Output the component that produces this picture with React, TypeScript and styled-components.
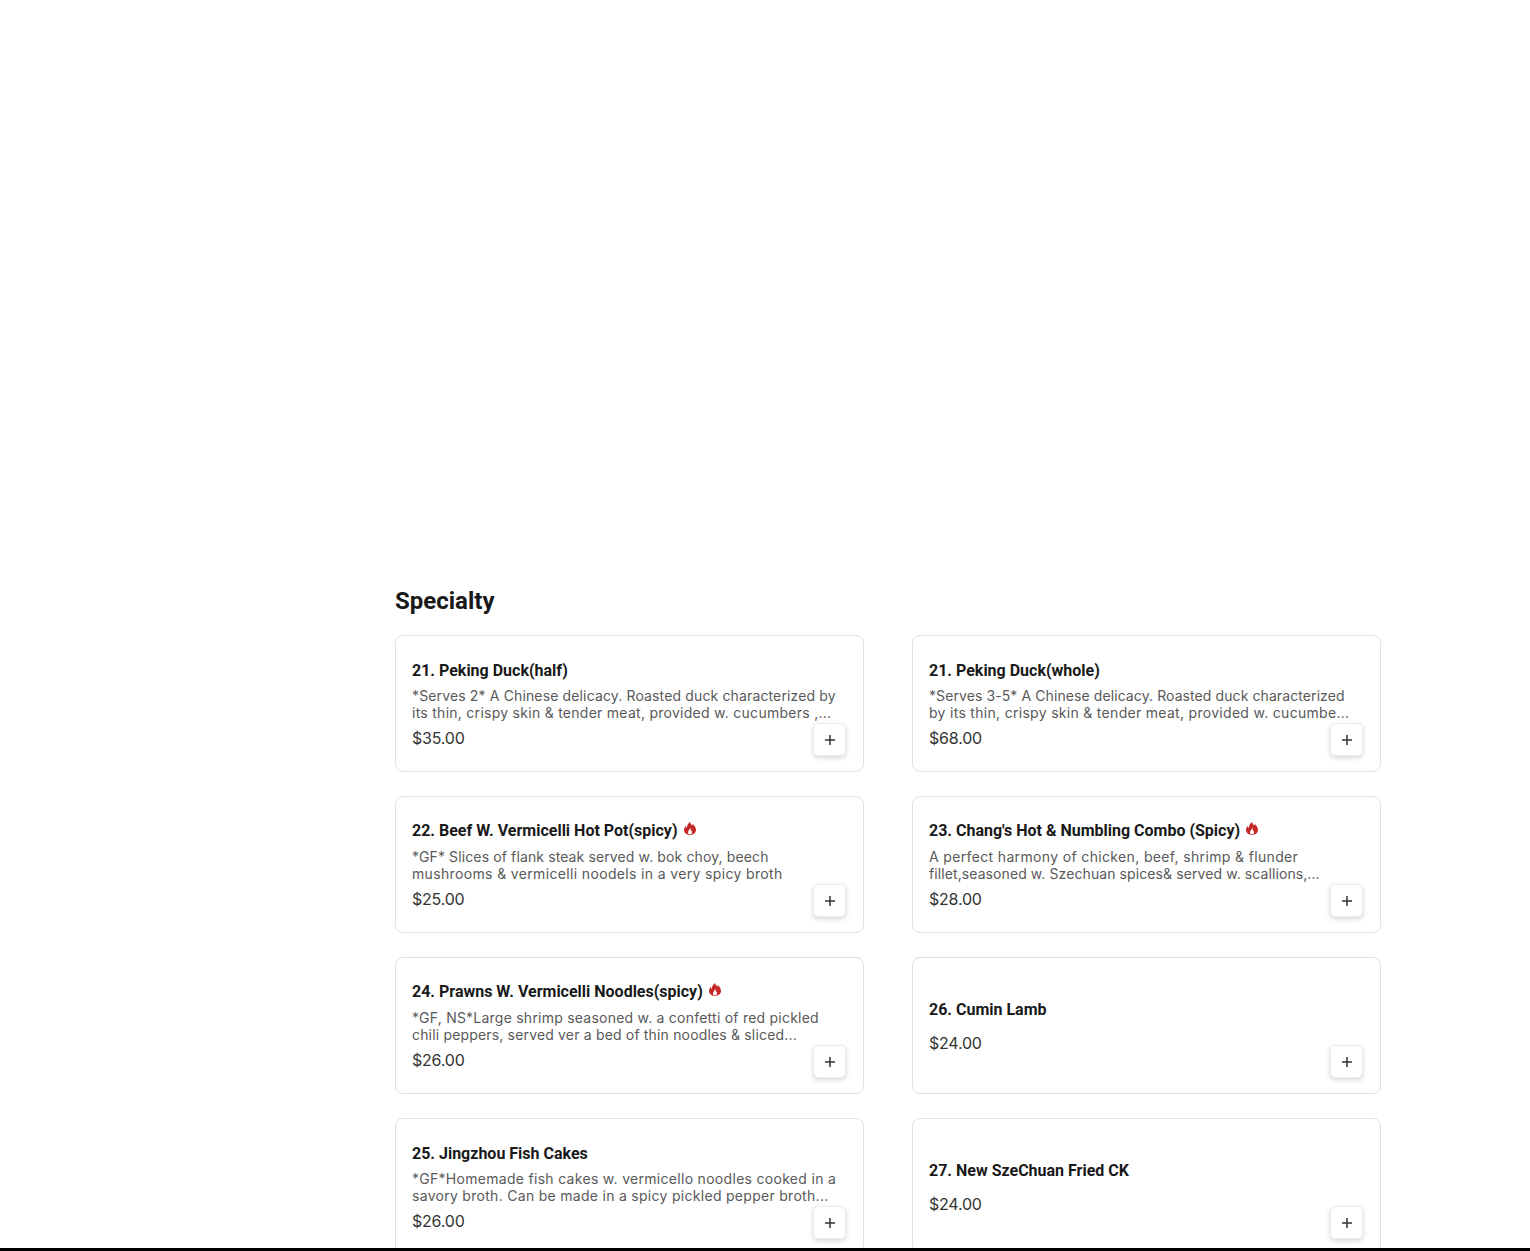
import { createGlobalStyle } from 'styled-components';
import styled from 'styled-components';

type Line = {
  text: string;
  track: number;
};

type Dish = {
  name: string;
  spicy?: boolean;
  lines?: Line[];
  price: string;
};

const dishes: Dish[] = [
  {
    name: '21. Peking Duck(half)',
    lines: [
      { text: '*Serves 2* A Chinese delicacy. Roasted duck characterized by', track: 0.14 },
      { text: 'its thin, crispy skin & tender meat, provided w. cucumbers ,...', track: 0.27 },
    ],
    price: '$35.00',
  },
  {
    name: '21. Peking Duck(whole)',
    lines: [
      { text: '*Serves 3-5* A Chinese delicacy. Roasted duck characterized', track: 0.09 },
      { text: 'by its thin, crispy skin & tender meat, provided w. cucumbe...', track: 0.3 },
    ],
    price: '$68.00',
  },
  {
    name: '22. Beef W. Vermicelli Hot Pot(spicy)',
    spicy: true,
    lines: [
      { text: '*GF* Slices of flank steak served w. bok choy, beech', track: 0.12 },
      { text: 'mushrooms & vermicelli noodels in a very spicy broth', track: 0.35 },
    ],
    price: '$25.00',
  },
  {
    name: "23. Chang's Hot & Numbling Combo (Spicy)",
    spicy: true,
    lines: [
      { text: 'A perfect harmony of chicken, beef, shrimp & flunder', track: 0.35 },
      { text: 'fillet,seasoned w. Szechuan spices& served w. scallions,...', track: 0.09 },
    ],
    price: '$28.00',
  },
  {
    name: '24. Prawns W. Vermicelli Noodles(spicy)',
    spicy: true,
    lines: [
      { text: '*GF, NS*Large shrimp seasoned w. a confetti of red pickled', track: 0.23 },
      { text: 'chili peppers, served ver a bed of thin noodles & sliced...', track: 0.17 },
    ],
    price: '$26.00',
  },
  { name: '26. Cumin Lamb', price: '$24.00' },
  {
    name: '25. Jingzhou Fish Cakes',
    lines: [
      { text: '*GF*Homemade fish cakes w. vermicello noodles cooked in a', track: 0.3 },
      { text: 'savory broth. Can be made in a spicy pickled pepper broth...', track: 0.29 },
    ],
    price: '$26.00',
  },
  { name: '27. New SzeChuan Fried CK', price: '$24.00' },
];

const Flame = () => (
  <FlameSvg viewBox="0 0 12 13" aria-hidden="true">
    <path
      fillRule="evenodd"
      d="M6 0c.4 1.6 1.2 2.500 2.200 3.500.3-.5.5-1 .5-1.600C10.600 3.500 12 5.700 12 8.100 12 10.900 9.600 13 6 13S0 10.900 0 8.100c0-1.700.8-3 1.800-4.100.1.900.4 1.500 1 2C2.700 3.700 4 1.500 6 0zM6.300 5.800c-.3 1.500-2.300 2.800-2.300 4.700 0 1 .8 1.800 2 1.800s2-.8 2-1.800c0-1-.5-1.500-1-2.200-.4-.7-.7-1.500-.7-2.500z"
    />
  </FlameSvg>
);

export default function App() {
  return (
    <>
      <GlobalStyle />
      <Main>
        <Heading>Specialty</Heading>
        <Grid>
          {dishes.map((d) => (
            <Card key={d.name}>
              <Title $spicy={d.spicy}>
                {d.name}
                {d.spicy && <Flame />}
              </Title>
              {d.lines && (
                <Desc>
                  {d.lines.map((l) => (
                    <DescLine key={l.text} $track={l.track}>
                      {l.text}
                    </DescLine>
                  ))}
                </Desc>
              )}
              <Price>{d.price}</Price>
              <AddButton aria-label={`Add ${d.name}`}>
                <svg width="10" height="10" viewBox="0 0 10 10">
                  <path d="M5 0v10M0 5h10" stroke="#333" strokeWidth="1.5" fill="none" />
                </svg>
              </AddButton>
            </Card>
          ))}
        </Grid>
      </Main>
      <BottomBar />
    </>
  );
}

const GlobalStyle = createGlobalStyle`
  html, body {
    margin: 0;
    height: 100%;
    overflow: hidden;
    background: #fff;
  }
`;

const Main = styled.main`
  width: 986px;
  margin-left: 395px;
  padding-top: 587px;
`;

const Heading = styled.h2`
  margin: 0 0 20px;
  font: 700 24px/28px Roboto, sans-serif;
  color: #191919;
`;

const Grid = styled.div`
  display: grid;
  grid-template-columns: 469px 469px;
  column-gap: 48px;
  row-gap: 24px;
`;

const Card = styled.article`
  position: relative;
  box-sizing: border-box;
  height: 137px;
  padding: 0 16px;
  display: flex;
  flex-direction: column;
  justify-content: center;
  background: #fff;
  border: 1px solid #e0e0e0;
  border-radius: 8px;
`;

const Title = styled.h3<{ $spicy?: boolean }>`
  display: flex;
  align-items: flex-start;
  gap: 6px;
  margin: 0 0 7px;
  height: ${(p) => (p.$spicy ? '21px' : '20px')};
  font: 700 16px/22px Roboto, sans-serif;
  color: #191919;
`;

const FlameSvg = styled.svg`
  flex: none;
  width: 12px;
  height: 13px;
  margin-top: 2px;
  fill: #c62828;
`;

const Desc = styled.p`
  margin: 0;
  font: 400 14px/17px Inter, sans-serif;
  color: #595959;
`;

const DescLine = styled.span<{ $track: number }>`
  display: block;
  white-space: nowrap;
  letter-spacing: ${(p) => p.$track}px;
`;

const Price = styled.div`
  margin-top: 7px;
  font: 400 16px/20px Inter, sans-serif;
  letter-spacing: -0.2px;
  color: #333;
`;

const AddButton = styled.button`
  position: absolute;
  right: 17px;
  bottom: 15px;
  width: 33px;
  height: 33px;
  padding: 0;
  display: flex;
  align-items: center;
  justify-content: center;
  background: #fff;
  border: 1px solid #ececec;
  border-radius: 5px;
  box-shadow: 0 2px 5px rgba(0, 0, 0, 0.16);
`;

const BottomBar = styled.div`
  position: fixed;
  left: 0;
  right: 0;
  bottom: 0;
  height: 3px;
  background: #000;
`;
